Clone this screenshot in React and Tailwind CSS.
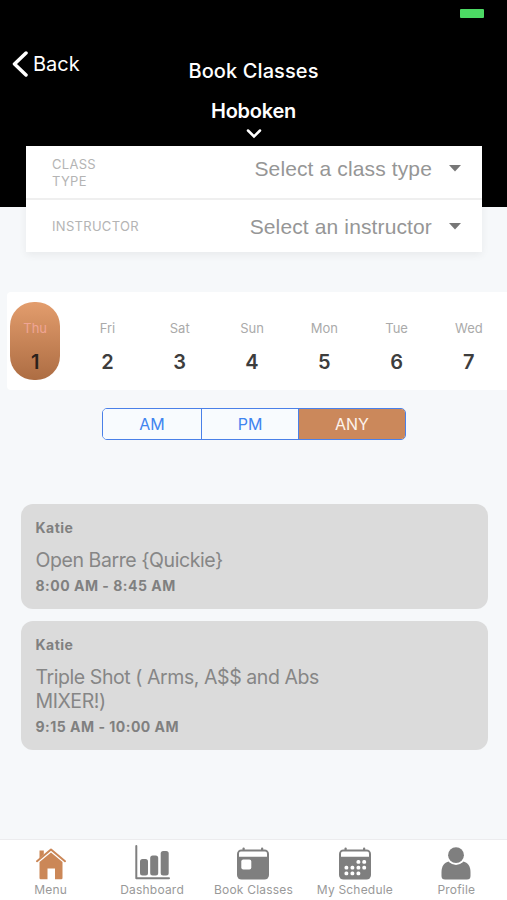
import React, { useState } from 'react';
import clsx from 'clsx';

const days = [
  { name: 'Thu', date: 1 },
  { name: 'Fri', date: 2 },
  { name: 'Sat', date: 3 },
  { name: 'Sun', date: 4 },
  { name: 'Mon', date: 5 },
  { name: 'Tue', date: 6 },
  { name: 'Wed', date: 7 },
];

const classes = [
  { id: 1, instructor: 'Katie', title: 'Open Barre {Quickie}', time: '8:00 AM - 8:45 AM' },
  { id: 2, instructor: 'Katie', title: 'Triple Shot ( Arms, A$$ and Abs MIXER!)', time: '9:15 AM - 10:00 AM' },
];

const HomeIcon = () => (
  <svg width="30" height="32" viewBox="0 0 30 32" className="text-[#cb8757]">
    <path d="M3.5 2.5h4.3v4L3.5 10.3z" fill="currentColor" />
    <path d="M1 13.200 15 1.500 29 13.200" fill="none" stroke="currentColor" strokeWidth="2" strokeLinecap="round" strokeLinejoin="round" />
    <path d="M15 4.500 26.500 14v16a1.200 1.200 0 0 1-1.200 1.200H19V20.500h-7.500v10.700H4.700A1.200 1.200 0 0 1 3.500 30V14z" fill="currentColor" />
  </svg>
);

const ChartIcon = () => (
  <svg width="35" height="35" viewBox="0 0 35 35">
    <path d="M1.300 1v32.300H34" fill="none" stroke="currentColor" strokeWidth="2" strokeLinecap="round" strokeLinejoin="round" />
    <rect x="5" y="14" width="8" height="16.500" rx="2.500" fill="currentColor" />
    <rect x="15.200" y="10.500" width="8" height="20" rx="2.500" fill="currentColor" />
    <rect x="25.700" y="6" width="8" height="24.500" rx="2.500" fill="currentColor" />
  </svg>
);

// both calendar tabs share the same frame
const CalendarFrame = ({ children }) => (
  <svg width="34" height="33" viewBox="0 0 34 33">
    <rect x="6.500" y="0.500" width="2.200" height="5" rx="1" fill="currentColor" />
    <rect x="25" y="0.500" width="2.200" height="5" rx="1" fill="currentColor" />
    <rect x="1" y="2.500" width="32" height="30" rx="4.500" fill="currentColor" />
    <path d="M3 9.800V6.300q0-1.800 1.800-1.800h24.400q1.800 0 1.800 1.800v3.500z" fill="#fff" />
    {children}
  </svg>
);

const BookIcon = () => (
  <CalendarFrame>
    <rect x="5.300" y="12.500" width="10" height="10" rx="2" fill="#fff" />
  </CalendarFrame>
);

const dots = [
  [18.5, 13], [24.3, 13],
  [6.5, 18.7], [12.5, 18.7], [18.5, 18.7], [24.3, 18.7],
  [6.5, 24.5], [12.5, 24.5], [18.5, 24.5],
];

const ScheduleIcon = () => (
  <CalendarFrame>
    {dots.map(([x, y]) => (
      <rect key={`${x}-${y}`} x={x} y={y} width="3.800" height="3.800" rx="1.500" fill="#fff" />
    ))}
  </CalendarFrame>
);

const ProfileIcon = () => (
  <svg width="30" height="33" viewBox="0 0 30 33">
    <path d="M8 14.500C3 15.500.500 19.500.500 25v4q0 3.500 3.500 3.500h22q3.500 0 3.500-3.500v-4c0-5.500-2.500-9.500-7.500-10.500z" fill="currentColor" />
    <circle cx="15" cy="8.700" r="9.300" fill="#fff" />
    <circle cx="15" cy="8.200" r="7.900" fill="currentColor" />
  </svg>
);

const tabs = [
  { label: 'Menu', icon: HomeIcon },
  { label: 'Dashboard', icon: ChartIcon },
  { label: 'Book Classes', icon: BookIcon },
  { label: 'My Schedule', icon: ScheduleIcon },
  { label: 'Profile', icon: ProfileIcon },
];

const SelectRow = ({ label, value, className, labelClass, valueClass }) => (
  <div className={clsx('flex items-center justify-between pl-[26px] pr-[21px]', className)}>
    <span className={clsx('text-[13px] leading-[17px] tracking-[0.3px] text-[#b4b4b4]', labelClass)}>{label}</span>
    <div className={clsx('flex items-center gap-[17px]', valueClass)}>
      <span className="font-['Liberation_Sans',sans-serif] text-[21px] leading-6 tracking-[0.13px] text-[#969696]">{value}</span>
      <svg width="12" height="7" viewBox="0 0 12 7">
        <path d="M0 0h12L6 6.500z" fill="#777" />
      </svg>
    </div>
  </div>
);

const App = () => {
  const [day, setDay] = useState(1);
  const [period, setPeriod] = useState('ANY');

  return (
    <div className="flex h-[900px] w-[507px] flex-col overflow-hidden bg-[#f6f8fa] font-['Inter',sans-serif]">
      {/* Header */}
      <header className="h-[207px] shrink-0 bg-black text-white">
        <div className="flex h-[50px] justify-end pr-[23px] pt-[9px]">
          <div className="h-[9px] w-6 rounded-[1px] bg-[#4cd964]" />
        </div>
        <div className="grid grid-cols-[1fr_auto_1fr] px-3">
          <button className="flex h-7 items-center gap-[5px] text-[20px] leading-7">
            <svg width="16" height="26" viewBox="0 0 16 26">
              <path d="M14 2 2.500 13 14 24" fill="none" stroke="currentColor" strokeWidth="3.500" strokeLinecap="round" strokeLinejoin="round" />
            </svg>
            Back
          </button>
          <h1 className="mt-[7px] text-[20px] font-medium leading-7 tracking-[0.1px]">Book Classes</h1>
        </div>
        <div className="mt-3 flex flex-col items-center">
          <span className="text-[20px] font-semibold leading-7 tracking-[-0.25px]">Hoboken</span>
          <svg width="16" height="10" viewBox="0 0 16 10" className="mt-1">
            <path d="m2 1.500 6 6 6-6" fill="none" stroke="currentColor" strokeWidth="2.500" strokeLinecap="round" />
          </svg>
        </div>
      </header>

      {/* Filters */}
      <section className="relative ml-[26px] mr-[25px] -mt-[61px] h-[106px] shrink-0 bg-white shadow-[0_3px_8px_rgba(0,0,0,0.06)]">
        <SelectRow
          label="CLASS TYPE"
          value="Select a class type"
          className="h-[54px] border-b-2 border-[#efefef]"
          labelClass="mt-px w-[60px]"
          valueClass="-mt-[7px]"
        />
        <SelectRow label="INSTRUCTOR" value="Select an instructor" className="h-[53px]" />
      </section>

      {/* Week */}
      <section className="ml-[7px] mt-10 h-[98px] shrink-0 rounded-l-[4px] bg-white">
        <div className="-ml-2 grid w-[506px] grid-cols-7 pt-[10px]">
          {days.map((d) => (
            <button
              key={d.date}
              onClick={() => setDay(d.date)}
              className={clsx(
                'flex h-[78px] w-[50px] flex-col items-center justify-self-center rounded-[24px] pt-[17px]',
                day === d.date && 'bg-linear-to-b from-[#e39d6d] to-[#ad6d43]'
              )}
            >
              <span className={clsx('text-[13px] leading-[18px]', day === d.date ? 'text-[#f0a595]' : 'text-[#aaa]')}>{d.name}</span>
              <span className={clsx('mt-[13px] text-[20px] font-semibold leading-6', day === d.date ? 'text-[#2b211b]' : 'text-[#3d3d3d]')}>{d.date}</span>
            </button>
          ))}
        </div>
      </section>

      {/* Time of day */}
      <div className="ml-[102px] mt-[18px] flex h-8 w-[304px] shrink-0 overflow-hidden rounded-[5px] border border-[#4a80e8] text-[16px]">
        {['AM', 'PM', 'ANY'].map((p) => (
          <button
            key={p}
            onClick={() => setPeriod(p)}
            className={clsx(
              'border-[#4a80e8]',
              p === 'AM' && 'w-[98px]',
              p === 'PM' && 'w-[97px] border-l',
              p === 'ANY' && 'flex-1 border-l',
              period === p ? 'bg-[#cb885b] text-[#fdf3ec]' : 'bg-[#f8fbfe] text-[#4084f0]'
            )}
          >
            {p}
          </button>
        ))}
      </div>

      {/* Class list */}
      <main className="ml-[20.5px] mr-[19.5px] mt-16 flex flex-1 flex-col gap-[12.5px]">
        {classes.map((c) => (
          <article key={c.id} className="rounded-[12px] bg-[#dbdbdb] px-[15px] pb-[13px] pt-[14px] text-[#868686]">
            <p className="text-[14px] font-bold leading-5 tracking-[0.5px] text-[#808080]">{c.instructor}</p>
            <h2 className="mt-[9.5px] w-[310px] text-[19.5px] leading-[24.5px] tracking-[-0.43px]">{c.title}</h2>
            <p className="mt-[3.5px] text-[14px] font-bold leading-5 tracking-[0.5px] text-[#808080]">{c.time}</p>
          </article>
        ))}
      </main>

      {/* Tab bar */}
      <nav className="grid h-[61px] shrink-0 grid-cols-5 border-t border-[#ececee] bg-white text-[#7f7f7f]">
        {tabs.map(({ label, icon: Icon }) => (
          <button key={label} className="flex flex-col items-center">
            <span className="flex h-[42px] items-end pb-[2px]">
              <Icon />
            </span>
            <span className="whitespace-nowrap text-[12px] leading-4 tracking-[0.2px] text-[#999]">{label}</span>
          </button>
        ))}
      </nav>
    </div>
  );
};

export default App;
